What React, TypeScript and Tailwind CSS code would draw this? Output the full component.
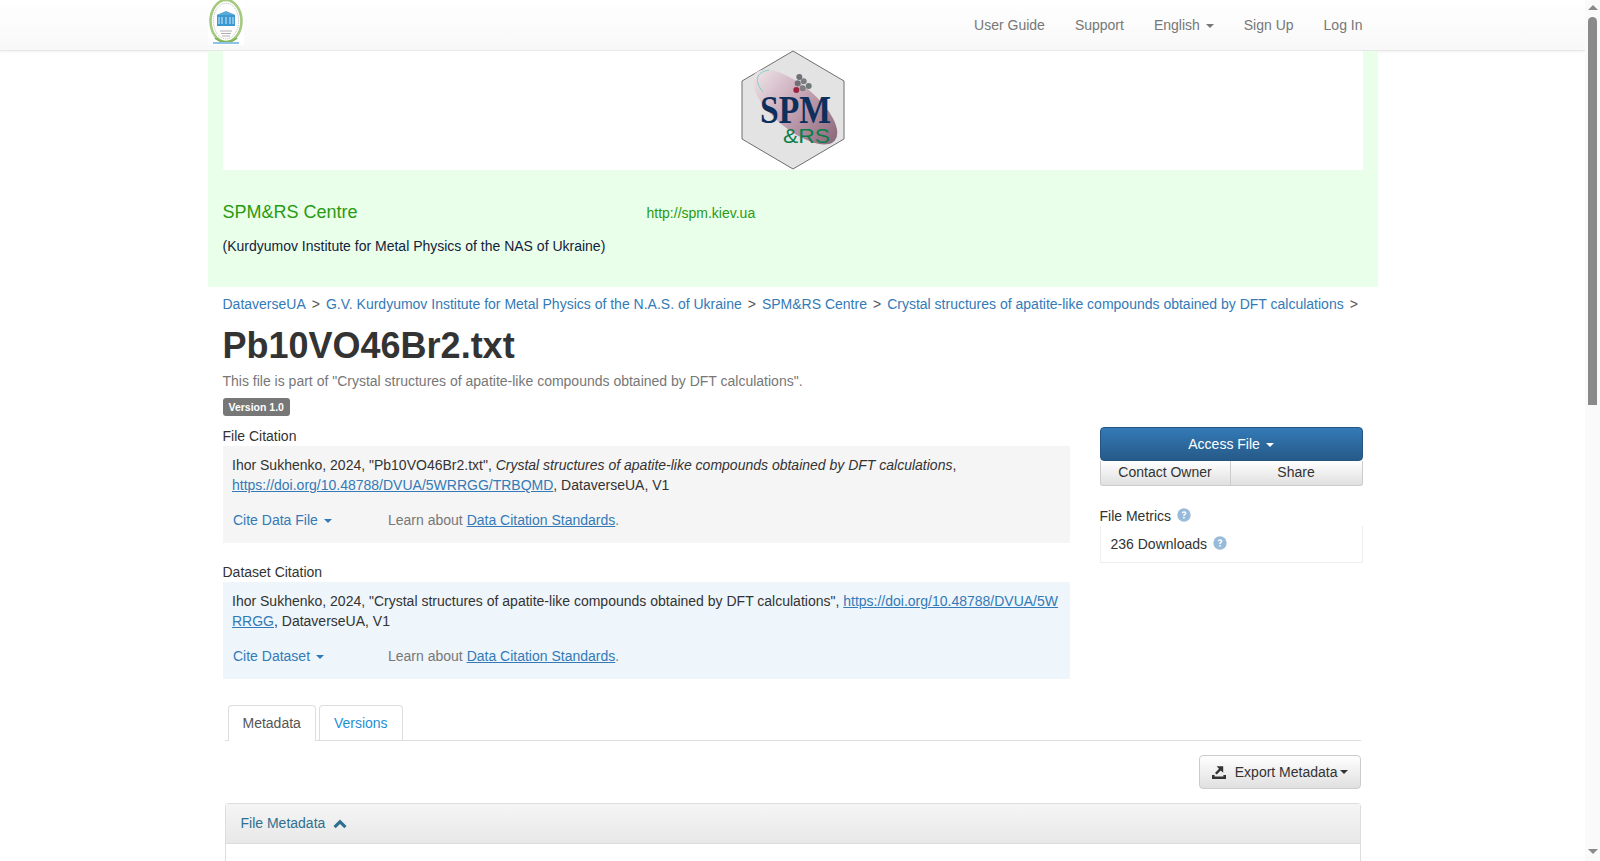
import React from "react";

const FONT = "font-['Liberation_Sans',Arial,sans-serif]";

function Caret({ color = "border-t-current" }: { color?: string }) {
  return (
    <span
      className={`ml-[2px] inline-block h-0 w-0 border-x-4 border-t-4 border-x-transparent align-middle ${color}`}
    />
  );
}

function QuestionIcon() {
  return (
    <svg viewBox="0 0 14 14" className="ml-[6px] inline-block h-[14px] w-[14px] align-[-1px]">
      <circle cx="7" cy="7" r="6.7" fill="#99bbdb" />
      <path
        d="M4.7 5.3c.1-1.4 1.1-2.1 2.4-2.1 1.4 0 2.3.8 2.3 1.9 0 .9-.5 1.3-1.1 1.8-.5.4-.7.6-.7 1.2H6.1c0-1 .3-1.4 1-1.9.5-.4.7-.6.7-1 0-.4-.3-.7-.8-.7-.5 0-.8.3-.9.8H4.7zM6.1 9h1.6v1.6H6.1z"
        fill="#fff"
      />
    </svg>
  );
}

function SealLogo() {
  return (
    <svg viewBox="0 0 36 45" className="h-[45px] w-[36px] bg-white">
      <ellipse cx="18" cy="21" rx="15.5" ry="21" fill="none" stroke="#a5c97f" strokeWidth="2.6" />
      <ellipse cx="18" cy="21" rx="12.6" ry="17.8" fill="none" stroke="#b8b8b8" strokeWidth="1" strokeDasharray="1 1" />
      <rect x="9" y="15" width="18" height="11" fill="#3b98d0" />
      <path d="M8.5 15 18 11l9.5 4z" fill="#58a8d8" />
      <path d="M11 17v7M14 17v7M18 17v7M22 17v7M25 17v7" stroke="#d5ecf8" strokeWidth="1" />
      <path d="M12 31h12M13 33.5h10M14 36h8" stroke="#9a9a9a" strokeWidth="0.8" />
      <path d="M7 38c4 3 8 4 11 4s7-1 11-4" fill="none" stroke="#7fb35a" strokeWidth="2" />
      <path d="M5 43h26" stroke="#8cc4e8" strokeWidth="2" />
    </svg>
  );
}

function SpmLogo() {
  const dots: [number, number, string][] = [
    [58.3, 27, "#6f6f78"],
    [56.7, 33.3, "#6f6f78"],
    [62.7, 31.3, "#7d7d80"],
    [67.7, 36, "#6f7a78"],
    [61.7, 38.3, "#7d7d80"],
    [55.3, 40, "#9c2440"],
  ];
  return (
    <svg viewBox="0 0 104 120" className="h-[120px] w-[104px]">
      <defs>
        <linearGradient id="spmBlob" x1="0" y1="0" x2="1" y2="0">
          <stop offset="0" stopColor="#ece2e6" />
          <stop offset="0.45" stopColor="#c9a8b8" />
          <stop offset="1" stopColor="#8d6a7c" />
        </linearGradient>
      </defs>
      <polygon points="52,1 103,31 103,89 52,119 1,89 1,31" fill="#e3e3e3" stroke="#6e6e6e" strokeWidth="1" />
      <ellipse cx="54" cy="57" rx="52" ry="22" transform="rotate(40 54 57)" fill="url(#spmBlob)" />
      <path d="M28 20C16 22 12 30 22 42" fill="none" stroke="#5fd0c0" strokeWidth="0.8" />
      {dots.map(([x, y, c], i) => (
        <circle key={i} cx={x} cy={y} r="3" fill={c} />
      ))}
      <text
        x="19"
        y="73"
        fontFamily="'Liberation Serif',serif"
        fontWeight="700"
        fontSize="39"
        fill="#0d2f5c"
        textLength="71"
        lengthAdjust="spacingAndGlyphs"
      >
        SPM
      </text>
      <text
        x="42"
        y="93"
        fontFamily="'Liberation Sans',sans-serif"
        fontSize="21"
        fill="#0b7f4a"
        textLength="47"
        lengthAdjust="spacingAndGlyphs"
      >
        &amp;RS
      </text>
    </svg>
  );
}

function Scrollbar() {
  return (
    <div className="flex h-full w-[15px] shrink-0 flex-col items-center bg-[#fafafa]">
      <div className="mt-[5px] h-0 w-0 border-x-[5px] border-b-[5px] border-x-transparent border-b-[#8a8a8a]" />
      <div className="mt-[7px] h-[388px] w-[9px] rounded-t-[5px] bg-[#8a8a8a]" />
      <div className="mt-auto mb-[7px] h-0 w-0 border-x-[5px] border-t-[5px] border-x-transparent border-t-[#8a8a8a]" />
    </div>
  );
}

function NavBar() {
  const item = "px-[15px] text-[14px] leading-[50px] text-[#777]";
  return (
    <div className="h-[51px] shrink-0 border-b border-[#e7e7e7] bg-gradient-to-b from-white to-[#f8f8f8] shadow-[0_1px_3px_rgba(0,0,0,0.06)]">
      <div className="mx-auto flex w-[1170px] items-start justify-between">
        <SealLogo />
        <div className="flex">
          <span className={item}>User Guide</span>
          <span className={item}>Support</span>
          <span className={item}>
            English <Caret />
          </span>
          <span className={item}>Sign Up</span>
          <span className={item}>Log In</span>
        </div>
      </div>
    </div>
  );
}

function Crumb({ children }: { children: React.ReactNode }) {
  return <span className="text-[#337ab7]">{children}</span>;
}

function CitationBox({
  tint,
  children,
  cite,
}: {
  tint: string;
  children: React.ReactNode;
  cite: string;
}) {
  return (
    <div className={`h-[97px] px-[9.5px] pt-[9px] text-[14px] leading-[20px] text-[#333] ${tint}`}>
      <div>{children}</div>
      <div className="mt-[15px] flex">
        <span className="ml-px w-[155px] text-[#337ab7]">
          {cite} <Caret />
        </span>
        <span className="text-[#777]">
          Learn about <a className="text-[#337ab7] underline">Data Citation Standards</a>.
        </span>
      </div>
    </div>
  );
}

export default function App() {
  return (
    <div className={`flex h-[861px] w-[1600px] overflow-hidden bg-white ${FONT}`}>
      <div className="flex h-full min-w-0 flex-1 flex-col overflow-hidden">
        <NavBar />
        <div className="mx-auto w-[1170px]">
          <div className="h-[236px] bg-[#e9ffe9] px-[15px]">
            <div className="flex h-[119px] justify-center bg-white">
              <div className="-mt-[1px]">
                <SpmLogo />
              </div>
            </div>
            <div className="mt-[30px] flex items-baseline">
              <span className="w-[424px] text-[18px] leading-[25px] text-[#2a9a12]">SPM&amp;RS Centre</span>
              <span className="text-[14px] text-[#2a9a12]">http://spm.kiev.ua</span>
            </div>
            <div className="mt-[11px] text-[14px] leading-[20px] text-[#14213d]">
              (Kurdyumov Institute for Metal Physics of the NAS of Ukraine)
            </div>
          </div>

          <div className="px-[15px]">
            <div className="mt-[7px] flex gap-[6px] text-[14px] leading-[20px] text-[#555]">
              <Crumb>DataverseUA</Crumb>
              <span>&gt;</span>
              <Crumb>G.V. Kurdyumov Institute for Metal Physics of the N.A.S. of Ukraine</Crumb>
              <span>&gt;</span>
              <Crumb>SPM&amp;RS Centre</Crumb>
              <span>&gt;</span>
              <Crumb>Crystal structures of apatite-like compounds obtained by DFT calculations</Crumb>
              <span>&gt;</span>
            </div>
            <h1 className="mt-[12px] text-[36px] font-bold leading-[40px] text-[#333]">Pb10VO46Br2.txt</h1>
            <p className="mt-[5px] text-[14px] leading-[20px] text-[#777]">
              This file is part of "Crystal structures of apatite-like compounds obtained by DFT calculations".
            </p>
            <span className="mt-[7px] block w-fit rounded-[3px] bg-[#777] px-[6px] text-[10.5px] font-bold leading-[18px] text-white">
              Version 1.0
            </span>

            <div className="flex justify-between">
              <div className="w-[847px]">
                <div className="mt-[10px] text-[14px] leading-[20px] text-[#333]">File Citation</div>
                <CitationBox tint="bg-[#f5f5f5]" cite="Cite Data File">
                  Ihor Sukhenko, 2024, "Pb10VO46Br2.txt", <em>Crystal structures of apatite-like compounds obtained by DFT calculations</em>,{" "}
                  <a className="text-[#337ab7] underline">https://doi.org/10.48788/DVUA/5WRRGG/TRBQMD</a>, DataverseUA, V1
                </CitationBox>
                <div className="mt-[19px] text-[14px] leading-[20px] text-[#333]">Dataset Citation</div>
                <CitationBox tint="bg-[#eef5fb]" cite="Cite Dataset">
                  Ihor Sukhenko, 2024, "Crystal structures of apatite-like compounds obtained by DFT calculations",{" "}
                  <a className="break-all text-[#337ab7] underline">https://doi.org/10.48788/DVUA/5WRRGG</a>, DataverseUA, V1
                </CitationBox>
              </div>

              <div className="w-[263px] pt-[11px]">
                <div className="h-[34px] rounded-[4px] border border-[#245580] bg-gradient-to-b from-[#337ab7] to-[#265a88] text-center text-[14px] leading-[32px] text-white">
                  Access File <Caret />
                </div>
                <div className="flex h-[25px] text-center text-[14px] leading-[23px] text-[#333]">
                  <div className="w-[131px] rounded-bl-[3px] border border-[#ccc] border-t-0 bg-gradient-to-b from-white to-[#e0e0e0]">
                    Contact Owner
                  </div>
                  <div className="flex-1 rounded-br-[3px] border border-l-0 border-t-0 border-[#ccc] bg-gradient-to-b from-white to-[#e0e0e0]">
                    Share
                  </div>
                </div>
                <div className="mt-[20px] text-[14px] leading-[20px] text-[#333]">
                  File Metrics
                  <QuestionIcon />
                </div>
                <div className="h-[37px] border border-t-0 border-[#eee] pl-[10px] pt-[8px] text-[14px] leading-[20px] text-[#333]">
                  236 Downloads
                  <QuestionIcon />
                </div>
              </div>
            </div>

            <div className="mx-[2px] mt-[26px] flex h-[36px] gap-[3px] border-b border-[#ddd] pl-[3px] text-[14px] leading-[20px]">
              <div className="h-[36px] rounded-t-[4px] border border-b-0 border-[#ddd] bg-white px-[14px] pt-[7px] text-[#555]">
                Metadata
              </div>
              <div className="h-[35px] rounded-t-[4px] border border-b-0 border-[#ddd] px-[14px] pt-[7px] text-[#1f8fd3]">
                Versions
              </div>
            </div>

            <div className="mx-[2px] mt-[14px] flex justify-end">
              <div className="flex h-[34px] items-center rounded-[4px] border border-[#ccc] bg-gradient-to-b from-white to-[#e0e0e0] px-[12px] text-[14px] text-[#333]">
                <svg viewBox="0 0 14 14" className="mr-[9px] h-[14px] w-[14px]">
                  <path
                    d="M0 10h2.6v1.4h8.8V10H14v4H0zM4.6 1.2h6.6v6.6L8.8 5.6 4.7 9.6 3 7.9 7 3.7z"
                    fill="#333"
                  />
                </svg>
                Export Metadata <Caret />
              </div>
            </div>

            <div className="mx-[2px] mt-[14px] h-[60px] rounded-t-[4px] border border-b-0 border-[#ddd]">
              <div className="flex h-[40px] items-center border-b border-[#ddd] bg-gradient-to-b from-[#f5f5f5] to-[#e8e8e8] pl-[15px] text-[14px] text-[#2f6f8f]">
                File Metadata
                <svg viewBox="0 0 14 10" className="ml-[8px] h-[10px] w-[14px]">
                  <path d="M7 0.5 13.5 7 11.3 9.2 7 4.9 2.7 9.2 0.5 7z" fill="#2f6f8f" />
                </svg>
              </div>
            </div>
          </div>
        </div>
      </div>
      <Scrollbar />
    </div>
  );
}
